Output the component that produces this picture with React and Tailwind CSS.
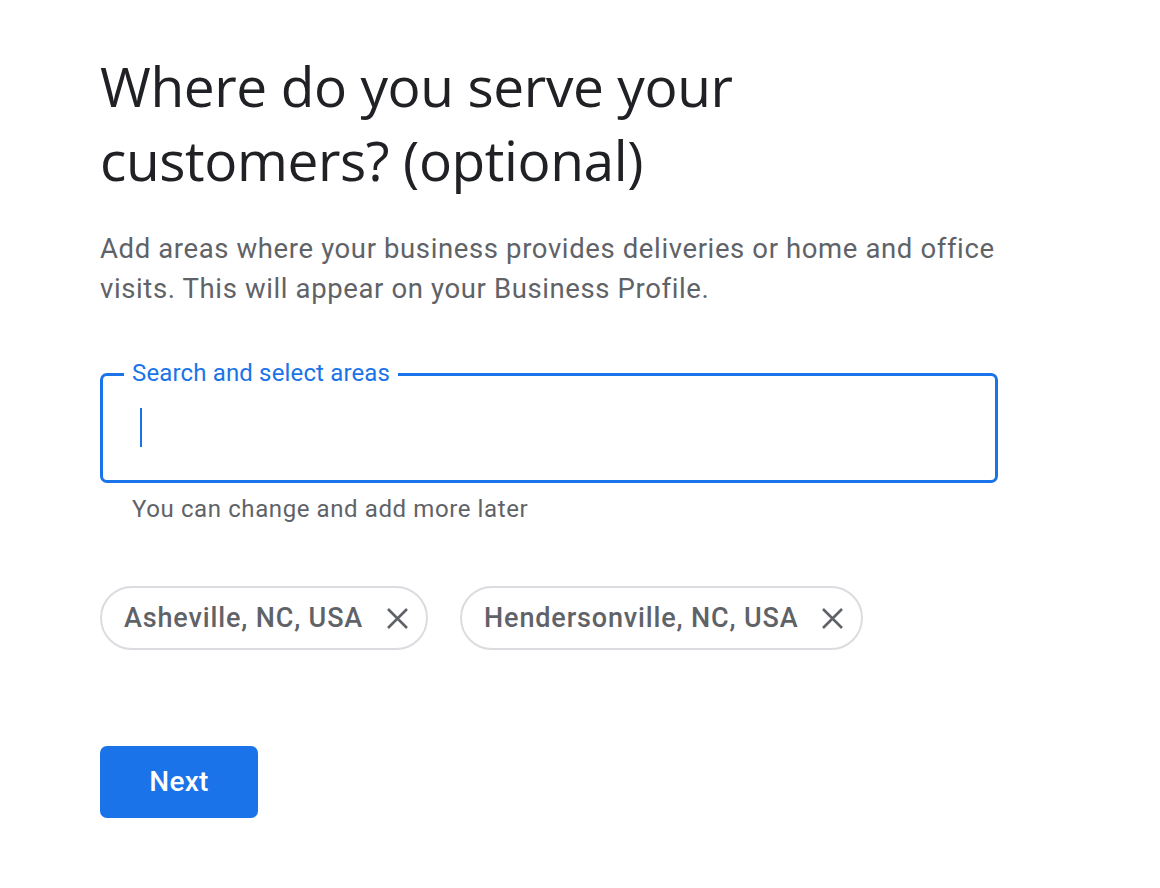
import React from "react";

function XIcon() {
  return (
    <svg width="23" height="23" viewBox="0 0 23 23" className="shrink-0">
      <path d="M2 2L21 21M21 2L2 21" stroke="#5f6368" strokeWidth="2.6" fill="none" />
    </svg>
  );
}

function Chip({ label }) {
  return (
    <div className="flex h-[64px] items-center gap-[23px] rounded-full border-2 border-[#dadce0] pl-[22px] pr-[17px]">
      <span className="text-[27px] font-medium text-[#5f6368] tracking-[0.85px]" style={{ fontFamily: "Roboto, sans-serif" }}>{label}</span>
      <XIcon />
    </div>
  );
}

export default function App() {
  return (
    <div className="min-h-[888px] w-full bg-white" style={{ fontFamily: "Roboto, 'Liberation Sans', sans-serif" }}>
      <div className="w-[900px] pl-[100px] pt-[49px] box-content">
        <h1
          className="text-[55px] leading-[74px] font-normal text-[#202124] tracking-[-0.4px]"
          style={{ fontFamily: "'Open Sans', sans-serif" }}
        >
          Where do you serve your
          <br />
          customers? (optional)
        </h1>
        <p className="mt-[32px] text-[27.5px] leading-[40px] text-[#5f6368] tracking-[0.62px]">
          Add areas where your business provides deliveries or home and office visits. This will appear on your Business Profile.
        </p>
        <div className="relative mt-[64px] h-[110px] w-[898px] rounded-[7px] border-[3px] border-[#1a73e8]">
          <span className="absolute -top-[17px] left-[21px] bg-white px-[8px] text-[24px] leading-[28px] text-[#1a73e8] tracking-[0.15px]">
            Search and select areas
          </span>
          <div className="absolute left-[37px] top-[32px] h-[39px] w-[2px] bg-[#1a73e8]"></div>
        </div>
        <p className="mt-[12px] pl-[32px] text-[24px] leading-[28px] text-[#5f6368] tracking-[0.6px]">
          You can change and add more later
        </p>
        <div className="mt-[63px] flex gap-[32px]">
          <Chip label="Asheville, NC, USA" />
          <Chip label="Hendersonville, NC, USA" />
        </div>
        <button className="mt-[96px] flex h-[72px] w-[158px] items-center justify-center rounded-[7px] bg-[#1a73e8] text-[28px] font-medium text-white tracking-[0.3px]">
          Next
        </button>
      </div>
    </div>
  );
}
